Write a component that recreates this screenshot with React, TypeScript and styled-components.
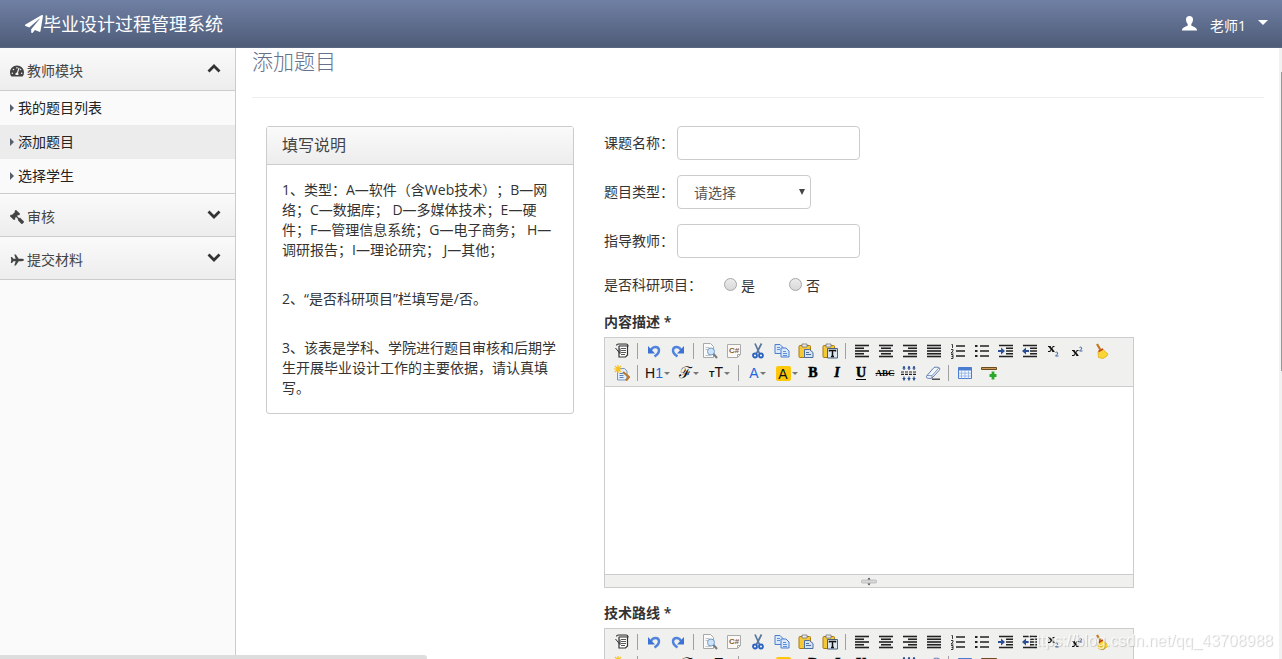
import React, { useState } from "react";
import styled, { createGlobalStyle, css } from "styled-components";
import { FaPaperPlane, FaTachometerAlt, FaGavel } from "react-icons/fa";

const sans = `"Open Sans", "Noto Sans CJK SC", sans-serif`;

const GlobalStyle = createGlobalStyle`
  *, *::before, *::after { box-sizing: border-box; }
  body {
    margin: 0;
    background: #fff;
    color: #333;
    font: 14px/20px ${sans};
    text-spacing-trim: space-all;
  }
  button, input, select, textarea { font: inherit; color: inherit; margin: 0; }
`;

/* ---------- page shell ---------- */

const Shell = styled.div`
  display: flex;
  flex-direction: column;
  height: 100vh;
`;

const TopBar = styled.header`
  display: flex;
  flex: none;
  align-items: center;
  justify-content: space-between;
  height: 48px;
  padding: 0 14px 0 25px;
  color: #fff;
  background: linear-gradient(#7080a4, #4e5c78);
  border-bottom: 1px solid #5a6682;
`;

const Brand = styled.a`
  display: flex;
  align-items: center;
  color: inherit;
  font-size: 18px;
  line-height: 26px;
  text-decoration: none;
`;

const UserMenu = styled.button`
  display: flex;
  align-items: center;
  padding: 0;
  border: 0;
  background: none;
  color: #fff;
`;

const UserName = styled.span`
  margin: 4px 12px 0 13px;
`;

const Caret = styled.span`
  border: 5px solid transparent;
  border-top-color: #fff;
  border-bottom: 0;
  margin-bottom: 2px;
`;

const Columns = styled.div`
  display: flex;
  flex: 1;
  min-height: 0;
`;

/* ---------- sidebar ---------- */

const Sidebar = styled.nav`
  flex: none;
  width: 236px;
  background: #fafafa;
  border-right: 1px solid #ccc;
`;

const GroupHeading = styled.button`
  display: flex;
  align-items: center;
  gap: 3px;
  width: 100%;
  height: 43px;
  padding: 4px 14px 0 10px;
  border: 0;
  border-bottom: 1px solid #ccc;
  background: linear-gradient(#fafafa, #ededed);
  color: #444;
  text-align: left;
`;

const GroupName = styled.span`
  flex: 1;
`;

const GroupItems = styled.ul`
  margin: 0;
  padding: 0;
  list-style: none;
  border-bottom: 1px solid #ccc;
`;

const ItemLink = styled.a<{ $active?: boolean }>`
  display: flex;
  align-items: center;
  gap: 4px;
  height: 34px;
  padding-left: 10px;
  color: #222;
  text-decoration: none;
  background: ${(p) => (p.$active ? "#ececec" : "transparent")};

  &::before {
    content: "";
    border: 4px solid transparent;
    border-left: 4px solid #555f70;
    border-right: 0;
  }
`;

/* ---------- main area ---------- */

const Main = styled.main`
  flex: 1;
  min-width: 0;
  overflow: auto;
  scrollbar-width: none;
  padding: 0 18px 0 16px;
`;

const PageTitle = styled.h1`
  margin: 0 0 28px;
  padding-bottom: 23px;
  border-bottom: 1px solid #eee;
  color: #66718c;
  font-size: 21px;
  font-weight: 300;
  line-height: 26px;
`;

const Grid = styled.div`
  display: grid;
  grid-template-columns: minmax(0, 1fr) minmax(0, 2fr);
  align-items: start;
  margin: 0 -1px;
  > * { margin: 0 15px; }
`;

const Panel = styled.section`
  border: 1px solid #ccc;
  border-radius: 3px;
`;

const PanelTitle = styled.h2`
  margin: 0;
  padding: 7px 15px;
  border-bottom: 1px solid #ccc;
  background: linear-gradient(#fafafa, #ededed);
  color: #444;
  font-size: 16px;
  font-weight: 400;
  line-height: 23px;
`;

const PanelBody = styled.div`
  display: grid;
  gap: 29px;
  padding: 15px;
  p { margin: 0; }
`;

const Form = styled.form`
  display: flex;
  flex-direction: column;
`;

const Field = styled.div`
  display: flex;
  align-items: center;
  margin-bottom: 15px;
`;

const FieldLabel = styled.label`
  width: 73px;
  white-space: nowrap;
`;

const control = css`
  height: 34px;
  border: 1px solid #ccc;
  border-radius: 4px;
  background: #fff;
  color: #555;
  outline: 0;
`;

const TextInput = styled.input`
  ${control}
  width: 183px;
  padding: 6px 12px;
`;

const SelectWrap = styled.span`
  display: grid;
  align-items: center;
  width: 134px;
  > * { grid-area: 1 / 1; }
`;

const Select = styled.select`
  ${control}
  width: 100%;
  padding: 2px 16px 0;
  appearance: none;
`;

const SelectArrow = styled.span`
  justify-self: end;
  margin-right: 6px;
  border: 3px solid transparent;
  border-top: 6px solid #444;
  border-bottom: 0;
  pointer-events: none;
`;

const RadioField = styled.fieldset`
  display: flex;
  align-items: center;
  height: 20px;
  margin: 0;
  padding: 0;
  border: 0;
`;

const RadioLegend = styled.span`
  width: 120px;
`;

const RadioLabel = styled.label`
  display: flex;
  align-items: center;
  gap: 4px;
  width: 65px;
  span { padding-top: 3px; }
`;

const Radio = styled.input`
  appearance: none;
  width: 13px;
  height: 13px;
  border: 1px solid #a6a6a6;
  border-radius: 50%;
  background: linear-gradient(#ececec, #d8d8d8);
  &:checked { background: radial-gradient(#555 35%, #e4e4e4 40%); }
`;

const EditorLabel = styled.label`
  margin: 19px 0 5px;
  font-weight: 600;
`;

/* ---------- rich text editor ---------- */

const EditorFrame = styled.div`
  max-width: 530px;
  margin-bottom: -4px;
  border: 1px solid #ccc;
`;

const Toolbar = styled.div`
  padding: 2px 5px;
  background: #f0f0ee;
  border-bottom: 1px solid #ccc;
`;

const ToolRow = styled.div`
  display: flex;
  height: 22px;
`;

const Tool = styled.button<{ $w?: number }>`
  display: flex;
  align-items: center;
  justify-content: center;
  flex: none;
  width: ${(p) => p.$w ?? 24}px;
  padding: 0;
  border: 0;
  background: none;
  color: #111;
  font: 14px/16px "Liberation Sans", sans-serif;
  svg { display: block; }
`;

const Separator = styled.span`
  flex: none;
  width: 1px;
  height: 16px;
  margin: 3px 4px 3px 3px;
  background: #a0a0a0;
`;

const ToolCaret = styled.span`
  margin-left: 1px;
  border: 3px solid transparent;
  border-top-color: #777;
  border-bottom: 0;
`;

const Blue = styled.span`
  color: #1f66e0;
`;

const Swatch = styled.span`
  width: 15px;
  height: 15px;
  border-radius: 2px;
  background: #fdc70c;
`;

const FontGlyph = styled.span`
  font: 16px/16px "DejaVu Serif", serif;
`;

const SmallT = styled.span`
  font-size: 9px;
  font-weight: 700;
`;

const Letter = styled.span<{ $italic?: boolean; $under?: boolean }>`
  font: ${(p) => (p.$italic ? "italic" : "normal")} 700 14px/12px "Liberation Serif", serif;
  color: #000;
  border-bottom: ${(p) => (p.$under ? "1px solid #000" : "0")};
  -webkit-text-stroke: 0.5px #000;
`;

const Strike = styled.s`
  font: 700 9px/12px "Liberation Serif", serif;
  color: #000;
`;

const TextArea = styled.textarea`
  display: block;
  width: 100%;
  height: 187px;
  padding: 4px;
  border: 0;
  outline: 0;
  resize: none;
`;

const StatusBar = styled.div`
  display: flex;
  align-items: center;
  justify-content: center;
  height: 13px;
  background: #f0f0ee;
  border-top: 1px solid #ccc;
`;

const Ico = ({ children }: { children: React.ReactNode }) => (
  <svg width="16" height="16" viewBox="0 0 16 16" fill="none" aria-hidden="true">
    {children}
  </svg>
);

const Lines = ({ rows }: { rows: [number, number][] }) => (
  <Ico>
    {rows.map(([x, w], i) => (
      <path key={i} d={`M${x} ${2.5 + i * 2.75}h${w}`} stroke="#222" strokeWidth="1.6" />
    ))}
  </Ico>
);

const page = (x: number, y: number) => (
  <path d={`M${x} ${y}h5l3 3v6h-8z`} fill="#dbe9fb" stroke="#4a7fd0" />
);

const Clipboard = ({ children }: { children: React.ReactNode }) => (
  <Ico>
    <rect x="1" y="2.5" width="11.500" height="12" rx="1" fill="#f5c838" stroke="#a67a10" />
    <path d="M4 1h5v3H4z" fill="#e8e8e8" stroke="#777" strokeWidth=".8" />
    {children}
  </Ico>
);

const icons = {
  source: (
    <Ico>
      <path d="M5 3v11h6.500l2-2V3" fill="#fff" stroke="#333" strokeWidth="1.200" />
      <path d="M2.500 2.500c0-1 1-1.500 2-1.500H12c1.500 0 2 1 2 2H5" fill="#ddd" stroke="#333" strokeWidth="1.100" />
      <path d="M7 5.500h5M7 7.500h5M7 9.500h5M7 11.500h4" stroke="#444" strokeWidth=".9" />
      <path d="m1.500 5 4.500 5.500V5.500" stroke="#333" />
    </Ico>
  ),
  undo: (
    <Ico>
      <path d="M5 7c2-4 7.500-4 8 0 .2 2.500-1.500 4.500-4.500 6.500" stroke="#4f83dd" strokeWidth="2.400" />
      <path d="M2 3v7.500h7z" fill="#3b72d4" />
    </Ico>
  ),
  redo: (
    <Ico>
      <path d="M11 7C9 3 3.500 3 3 7c-.2 2.500 1.500 4.500 4.500 6.500" stroke="#4f83dd" strokeWidth="2.400" />
      <path d="M14 3v7.500H7z" fill="#3b72d4" />
    </Ico>
  ),
  preview: (
    <Ico>
      <path d="M1.500.5h7l3 3v11h-10z" fill="#fbfbfb" stroke="#a9a9a9" />
      <path d="M3.500 4.500h4M3.500 6.500h3M3.500 12.500h5" stroke="#c4c4c4" />
      <circle cx="9" cy="8.500" r="3.500" fill="#cfe3f8" stroke="#6f9ccc" />
      <path d="m11.500 11 3.500 4" stroke="#7a7a7a" strokeWidth="2" />
    </Ico>
  ),
  code: (
    <Ico>
      <path d="M1.500 1.500h13v10l-3 3h-10z" fill="#fbf9f5" stroke="#aaa" />
      <path d="M11.500 14.500v-3h3" stroke="#aaa" />
      <text x="8" y="10" textAnchor="middle" fill="#8f5a1c" fontSize="8" fontWeight="700" fontFamily="Liberation Sans, sans-serif">C#</text>
    </Ico>
  ),
  cut: (
    <Ico>
      <path d="M5 .5l4.500 10M11.500.5 6.500 10.500" stroke="#56779f" strokeWidth="1.700" />
      <circle cx="5" cy="12.500" r="2" stroke="#2b62c0" strokeWidth="1.800" />
      <circle cx="11" cy="12.500" r="2" stroke="#2b62c0" strokeWidth="1.800" />
    </Ico>
  ),
  copy: (
    <Ico>
      {page(1, 1.5)}
      {page(7, 5)}
      <path d="M3 4.500h3M3 6.500h3M9 8.500h3M9 10.500h4M9 12.500h4" stroke="#5c90d8" />
    </Ico>
  ),
  paste: (
    <Clipboard>
      <path d="M6.500 6.500h5l3.500 3v5H6.500z" fill="#d5e3f3" stroke="#4b6f9e" />
      <path d="M8 9.500h3M8 11.500h5" stroke="#4b6f9e" />
    </Clipboard>
  ),
  plainPaste: (
    <Clipboard>
      <path d="M5.500 5.500h10v9.500h-10z" fill="#dce8f2" stroke="#49617c" />
      <path d="M7.500 8.500v-1h6v1M10.500 7.500v6M9 13.500h3" stroke="#111" strokeWidth="1.500" />
    </Clipboard>
  ),
  left: <Lines rows={[[1, 14], [1, 9], [1, 14], [1, 9], [1, 14]]} />,
  center: <Lines rows={[[1, 14], [3, 10], [1, 14], [3, 10], [1, 14]]} />,
  right: <Lines rows={[[1, 14], [6, 9], [1, 14], [6, 9], [1, 14]]} />,
  full: <Lines rows={[[1, 14], [1, 14], [1, 14], [1, 14], [1, 14]]} />,
  ordered: (
    <Ico>
      <path d="M6 3h9M6 8h9M6 13h9" stroke="#222" strokeWidth="1.300" />
      <path d="M1.500 1.500h1V5M1 6.500h2v1.500l-2 2h2.500M1 11.500h2v4H1M1.500 13.500H3" stroke="#222" strokeWidth=".9" />
    </Ico>
  ),
  bullets: (
    <Ico>
      <path d="M6 3h9M6 8h9M6 13h9" stroke="#222" strokeWidth="1.300" />
      <path d="M1 2h2.500v2H1zM1 7h2.500v2H1zM1 12h2.500v2H1z" fill="#222" />
    </Ico>
  ),
  indent: (
    <Ico>
      <path d="M1 2.500h14M8 5.300h7M8 8h7M8 10.700h7M1 13.500h14" stroke="#222" strokeWidth="1.600" />
      <path d="M0 7h3V4.500L7 8l-4 3.500V9H0z" fill="#2c4f94" />
    </Ico>
  ),
  outdent: (
    <Ico>
      <path d="M1 2.500h14M8 5.300h7M8 8h7M8 10.700h7M1 13.500h14" stroke="#222" strokeWidth="1.600" />
      <path d="M7 7H4V4.500L0 8l4 3.500V9h3z" fill="#2c4f94" />
    </Ico>
  ),
  sub: (
    <Ico>
      <path d="m3.500 3.500 4 5" stroke="#111" strokeWidth="2" />
      <path d="m7.500 3.500-4 5M2 3.500h2.500M6.500 3.500h2M2 8.500h2.500M6.500 8.500h2" stroke="#111" />
      <path d="M9.500 9.500c1-1 3 0 2 1.500l-2 2h3" stroke="#41649e" />
    </Ico>
  ),
  sup: (
    <Ico>
      <path d="m3.500 7.500 4 5" stroke="#111" strokeWidth="2" />
      <path d="m7.500 7.500-4 5M2 7.500h2.500M6.500 7.500h2M2 12.500h2.500M6.500 12.500h2" stroke="#111" />
      <path d="M9.500 4.500c1-1 3 0 2 1.500l-2 2h3" stroke="#41649e" />
    </Ico>
  ),
  clean: (
    <Ico>
      <path d="m3 1 3.500 6" stroke="#c07a24" strokeWidth="2.200" />
      <path d="M4 9c1-2 4-3.500 5-2.500l5 4.500-1 2-4 2.500-4.500-1z" fill="#f9d535" stroke="#e0ae1c" strokeWidth=".8" />
      <path d="m4.500 8.500 4.500-2.500" stroke="#c4431c" strokeWidth="1.500" />
    </Ico>
  ),
  quickFormat: (
    <Ico>
      <path d="M3.500 3.500h7l2.500 2.500v9H3.500z" fill="#e4eefa" stroke="#7b95b8" />
      <path d="M5.500 8.500h4M5.500 10.500h4M5.500 12.500h4" stroke="#4b76b3" strokeWidth=".9" />
      <path d="M4 0v8M0 4h8M1 1l6 6M7 1 1 7" stroke="#f7c21c" strokeWidth="1.200" />
      <path d="m9 7 6 5-3 3.500" stroke="#b8782c" strokeWidth="2.200" />
    </Ico>
  ),
  lineHeight: (
    <Ico>
      <path d="M0 7h16M0 9.300h16" stroke="#222" strokeWidth="1.200" strokeDasharray="3 1" />
      <path d="M3 1v4M8 1v4M13 1v4M3 11.500v4M8 11.500v4M13 11.500v4" stroke="#2c4f94" strokeWidth="1.200" />
      <path d="M1.200 3.500 3 1l1.800 2.500zM6.200 3.500 8 1l1.800 2.500zM11.200 3.500 13 1l1.800 2.500zM1.200 13 3 15.500 4.800 13zM6.200 13 8 15.500 9.800 13zM11.200 13l1.800 2.500 1.800-2.500z" fill="#2c4f94" />
    </Ico>
  ),
  eraser: (
    <Ico>
      <path d="m2 10.500 7-8c.5-.5 5-.5 5.500.5s0 2-.5 2.500l-7 7.500c-.5.500-4 .5-5 0s-.5-2 0-2.500z" fill="#f3f7fc" stroke="#5f7cae" />
      <path d="m2 10.500 5 .2 7-8M7 10.700v2.600" stroke="#5f7cae" strokeWidth=".8" />
      <path d="M7 14.200h8" stroke="#333" strokeWidth="1.300" />
    </Ico>
  ),
  table: (
    <Ico>
      <path d="M1.500 2.500h13v11h-13z" fill="#f4f8ff" stroke="#4a7cd0" />
      <path d="M1.500 2.500h13v3h-13z" fill="#4a7cd0" />
      <path d="M4.500 5.500v8M8 5.500v8M11.500 5.500v8M2 8.200h12M2 11h12" stroke="#8fb0e6" strokeWidth=".8" />
    </Ico>
  ),
  rule: (
    <Ico>
      <path d="M.5 2.500h15v2H.5z" fill="#c99a5c" stroke="#6b4a20" />
      <path d="M12 6.500v8M8.500 10.500h7" stroke="#2aa82a" strokeWidth="2.800" />
    </Ico>
  ),
};

type Item = { label: string; w?: number; body: React.ReactNode } | null;

const rowOne: Item[] = [
  { label: "HTML代码", body: icons.source },
  null,
  { label: "后退", body: icons.undo },
  { label: "前进", body: icons.redo },
  null,
  { label: "预览", body: icons.preview },
  { label: "插入程序代码", body: icons.code },
  { label: "剪切", body: icons.cut },
  { label: "复制", body: icons.copy },
  { label: "粘贴", body: icons.paste },
  { label: "粘贴为无格式文本", body: icons.plainPaste },
  null,
  { label: "左对齐", body: icons.left },
  { label: "居中", body: icons.center },
  { label: "右对齐", body: icons.right },
  { label: "两端对齐", body: icons.full },
  { label: "编号", body: icons.ordered },
  { label: "项目符号", body: icons.bullets },
  { label: "增加缩进", body: icons.indent },
  { label: "减少缩进", body: icons.outdent },
  { label: "下标", body: icons.sub },
  { label: "上标", body: icons.sup },
  { label: "清理HTML代码", body: icons.clean },
];

const rowTwo: Item[] = [
  { label: "一键排版", body: icons.quickFormat },
  null,
  { label: "段落", w: 31, body: <><span>H<Blue>1</Blue></span><ToolCaret /></> },
  { label: "字体", w: 31, body: <><FontGlyph>ℱ</FontGlyph><ToolCaret /></> },
  { label: "文字大小", w: 31, body: <><span><SmallT>T</SmallT>T</span><ToolCaret /></> },
  null,
  { label: "文字颜色", w: 29, body: <><Blue>A</Blue><ToolCaret /></> },
  { label: "文字背景", w: 29, body: <><Swatch>A</Swatch><ToolCaret /></> },
  { label: "粗体", body: <Letter>B</Letter> },
  { label: "斜体", body: <Letter $italic>I</Letter> },
  { label: "下划线", body: <Letter $under>U</Letter> },
  { label: "删除线", body: <Strike>ABC</Strike> },
  { label: "行距", body: icons.lineHeight },
  { label: "删除格式", body: icons.eraser },
  null,
  { label: "表格", body: icons.table },
  { label: "插入横线", body: icons.rule },
];

function Editor({ id, label }: { id: string; label: string }) {
  return (
    <>
      <EditorLabel htmlFor={id}>{label} *</EditorLabel>
      <EditorFrame>
        <Toolbar role="toolbar" aria-label={label}>
          {[rowOne, rowTwo].map((row, r) => (
            <ToolRow key={r}>
              {row.map((item, i) =>
                item ? (
                  <Tool key={i} type="button" aria-label={item.label} $w={item.w}>
                    {item.body}
                  </Tool>
                ) : (
                  <Separator key={i} />
                )
              )}
            </ToolRow>
          ))}
        </Toolbar>
        <TextArea id={id} />
        <StatusBar>
          <svg width="16" height="9" viewBox="0 0 16 9" aria-hidden="true">
            <rect x=".5" y="3" width="15" height="3" rx="1" fill="#d8d8d8" stroke="#aaa" strokeWidth=".6" />
            <path d="M6.500 2.500 8 .5l1.500 2zM6.500 6.500 8 8.500l1.500-2z" fill="#444" />
          </svg>
        </StatusBar>
      </EditorFrame>
    </>
  );
}

/* ---------- overlays ---------- */

const VerticalTrack = styled.div`
  position: fixed;
  top: 48px;
  right: 0;
  bottom: 0;
  width: 3px;
  padding: 24px 0 0 2px;
  background: #f1f1f1;
`;

const VerticalThumb = styled.div`
  height: 51%;
  background: #999;
`;

const HorizontalThumb = styled.div`
  position: fixed;
  left: 0;
  bottom: 0;
  width: 33.3%;
  height: 4px;
  border-top-right-radius: 3px;
  background: #ddd;
`;

const Watermark = styled.div`
  position: fixed;
  right: 9px;
  bottom: 8px;
  color: rgba(255, 255, 255, 0.7);
  font: 16px/20px "Liberation Sans", sans-serif;
  text-shadow: 1px 1px 1px rgba(0, 0, 0, 0.18);
  pointer-events: none;
`;

/* ---------- page ---------- */

const Gavel = styled(FaGavel)`
  transform: scaleX(-1);
`;

const Plane = () => (
  <svg width="14" height="14" viewBox="0 0 14 14" aria-hidden="true">
    <path
      d="M14 7c0 .7-1.300 1.200-2.500 1.200H8.700L5.800 12.500H4.300L5.700 8.200H3.400L2 10H.8l.5-3L.8 4H2l1.400 1.800h2.300L4.300 1.500h1.500l2.900 4.300h2.800C12.700 5.800 14 6.300 14 7z"
      fill="#444"
    />
  </svg>
);

const ChevronSvg = styled.svg`
  margin-bottom: 4px;
`;

const Chevron = ({ up }: { up?: boolean }) => (
  <ChevronSvg width="14" height="10" viewBox="0 0 14 10" aria-hidden="true">
    <path d={up ? "M1.500 7.500 7 2l5.500 5.500" : "M1.500 1.500 7 7l5.500-5.500"} fill="none" stroke="#333" strokeWidth="2.800" />
  </ChevronSvg>
);

const groups = [
  { name: "教师模块", icon: <FaTachometerAlt size={14} />, items: ["我的题目列表", "添加题目", "选择学生"] },
  { name: "审核", icon: <Gavel size={14} />, items: [] },
  { name: "提交材料", icon: <Plane />, items: [] },
];

export default function App() {
  const [research, setResearch] = useState("");

  return (
    <Shell>
      <GlobalStyle />
      <TopBar>
        <Brand href="#">
          <FaPaperPlane size={18} />
          毕业设计过程管理系统
        </Brand>
        <UserMenu type="button">
          <svg width="15" height="15" viewBox="0 0 15 15" aria-hidden="true">
            <path d="M7.500 0C5.300 0 4 1.400 4 3.600c0 1.800.7 3.500 1.700 4.400v1.400C4.200 10.500 0 11.300 0 14v.5h15V14c0-2.700-4.200-3.500-5.700-4.600V8C10.300 7.100 11 5.400 11 3.600 11 1.400 9.700 0 7.500 0z" fill="#fff" />
          </svg>
          <UserName>老师1</UserName>
          <Caret />
        </UserMenu>
      </TopBar>
      <Columns>
        <Sidebar>
          {groups.map((g) => (
            <React.Fragment key={g.name}>
              <GroupHeading type="button" aria-expanded={g.items.length > 0}>
                {g.icon}
                <GroupName>{g.name}</GroupName>
                <Chevron up={g.items.length > 0} />
              </GroupHeading>
              {g.items.length > 0 && (
                <GroupItems>
                  {g.items.map((item) => (
                    <li key={item}>
                      <ItemLink href="#" $active={item === "添加题目"}>{item}</ItemLink>
                    </li>
                  ))}
                </GroupItems>
              )}
            </React.Fragment>
          ))}
        </Sidebar>
        <Main>
          <PageTitle>添加题目</PageTitle>
          <Grid>
            <Panel>
              <PanelTitle>填写说明</PanelTitle>
              <PanelBody>
                <p>
                  1、类型：A—软件（含Web技术）；B—网络；C—数据库； D—多媒体技术；E—硬件；F—管理信息系统；G—电子商务； H—调研报告；I—理论研究； J—其他；
                </p>
                <p>2、“是否科研项目”栏填写是/否。</p>
                <p>3、该表是学科、学院进行题目审核和后期学生开展毕业设计工作的主要依据，请认真填写。</p>
              </PanelBody>
            </Panel>
            <Form>
              <Field>
                <FieldLabel htmlFor="topic">课题名称：</FieldLabel>
                <TextInput id="topic" type="text" />
              </Field>
              <Field>
                <FieldLabel htmlFor="kind">题目类型：</FieldLabel>
                <SelectWrap>
                  <Select id="kind">
                    <option>请选择</option>
                  </Select>
                  <SelectArrow />
                </SelectWrap>
              </Field>
              <Field>
                <FieldLabel htmlFor="teacher">指导教师：</FieldLabel>
                <TextInput id="teacher" type="text" />
              </Field>
              <RadioField aria-label="是否科研项目">
                <RadioLegend>是否科研项目：</RadioLegend>
                {["是", "否"].map((v) => (
                  <RadioLabel key={v}>
                    <Radio type="radio" name="research" checked={research === v} onChange={() => setResearch(v)} />
                    <span>{v}</span>
                  </RadioLabel>
                ))}
              </RadioField>
              <Editor id="content" label="内容描述" />
              <Editor id="route" label="技术路线" />
            </Form>
          </Grid>
        </Main>
      </Columns>
      <VerticalTrack>
        <VerticalThumb />
      </VerticalTrack>
      <HorizontalThumb />
      <Watermark>https://blog.csdn.net/qq_43708988</Watermark>
    </Shell>
  );
}
